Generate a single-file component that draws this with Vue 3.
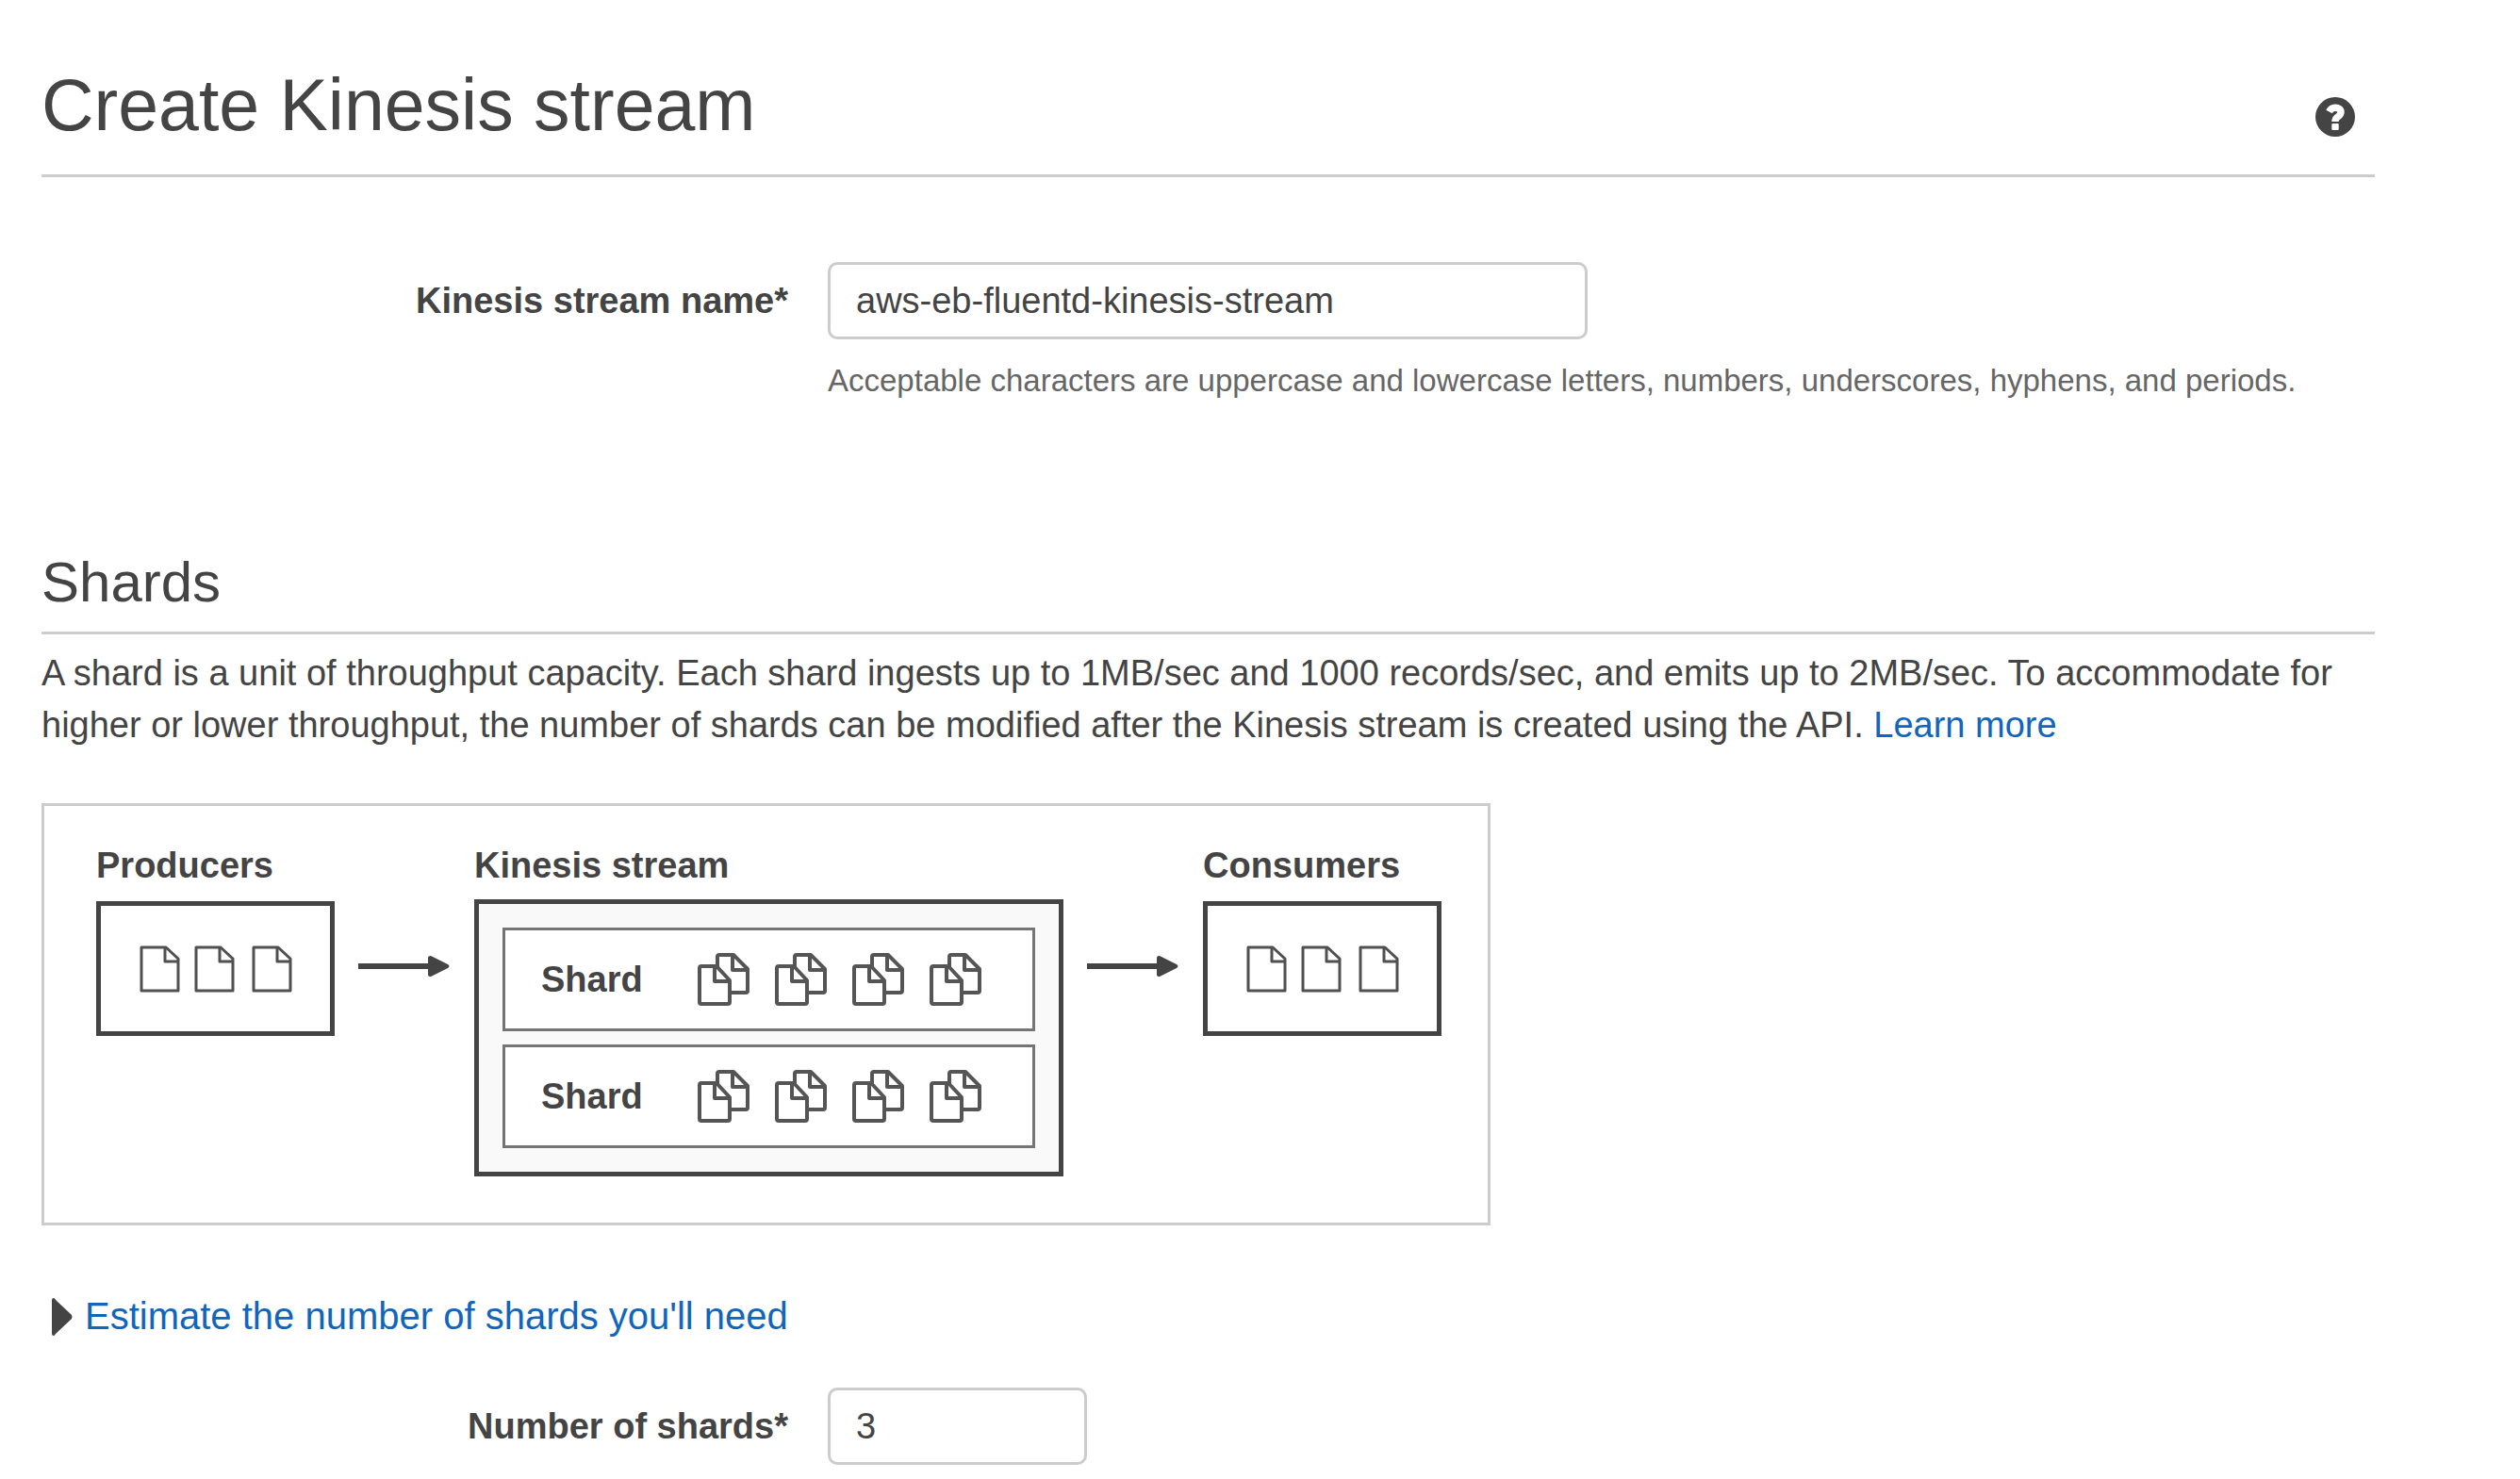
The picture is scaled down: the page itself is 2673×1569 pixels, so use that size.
<script setup>
import { ref } from 'vue'

const streamName = ref('aws-eb-fluentd-kinesis-stream')
const shardCount = ref('3')
const shardRows = [1, 2]
const copiesPerShard = [1, 2, 3, 4]
</script>

<template>
  <main class="page">
    <header class="page-header">
      <h1>Create Kinesis stream</h1>
      <button class="help" type="button" aria-label="Help">
        <svg viewBox="0 0 42 42" aria-hidden="true">
          <circle cx="21" cy="21" r="21" fill="#444" />
          <path
            d="M14.5 15.500C16 12.700 18 11.300 21 11.300C24.500 11.300 27 13 27 16C27 18.800 25.300 20 23.400 21.300C21.600 22.500 21 23.300 21 26"
            fill="none"
            stroke="#fff"
            stroke-width="7.400"
          />
          <rect x="17.300" y="28" width="7.400" height="7" rx="1" fill="#fff" />
        </svg>
      </button>
    </header>

    <form @submit.prevent>
      <div class="field name-field">
        <label for="stream-name">Kinesis stream name*</label>
        <div class="control">
          <input id="stream-name" v-model="streamName" type="text" aria-describedby="name-hint" />
          <p id="name-hint" class="hint">
            Acceptable characters are uppercase and lowercase letters, numbers, underscores, hyphens, and periods.
          </p>
        </div>
      </div>

      <section class="shards">
        <h2>Shards</h2>
        <p class="intro">
          A shard is a unit of throughput capacity. Each shard ingests up to 1MB/sec and 1000 records/sec, and emits up
          to 2MB/sec. To accommodate for higher or lower throughput, the number of shards can be modified after the
          Kinesis stream is created using the API. <a href="#learn-more">Learn more</a>
        </p>

        <div class="diagram">
          <div class="endpoint">
            <h3>Producers</h3>
            <div class="endpoint-box">
              <svg class="pages" viewBox="0 0 162 50" aria-hidden="true">
                <g v-for="x in [0, 58, 119]" :key="x" :transform="`translate(${x} 0)`">
                  <path d="M2 2H28L41 14V48H2Z" />
                  <path d="M27 2V17H41" />
                </g>
              </svg>
            </div>
          </div>

          <svg class="arrow" viewBox="0 0 98 22" aria-hidden="true">
            <path d="M0 8H74V2Q74 0 77 0L95 9Q98 11 95 13L77 22Q74 22 74 20V14H0Z" />
          </svg>

          <div class="stream">
            <h3>Kinesis stream</h3>
            <div class="stream-box">
              <div v-for="row in shardRows" :key="row" class="shard">
                <span>Shard</span>
                <div class="copies">
                  <svg v-for="copy in copiesPerShard" :key="copy" viewBox="0 0 55 56" aria-hidden="true">
                    <path d="M21 17V4Q21 2 23 2H38L53 17V40Q53 42 51 42H35" />
                    <path d="M37 2V18H53" />
                    <path d="M4 14H20L34 29V52Q34 54 32 54H4Q2 54 2 52V16Q2 14 4 14Z" />
                    <path d="M18 14V30H33" />
                  </svg>
                </div>
              </div>
            </div>
          </div>

          <svg class="arrow" viewBox="0 0 98 22" aria-hidden="true">
            <path d="M0 8H74V2Q74 0 77 0L95 9Q98 11 95 13L77 22Q74 22 74 20V14H0Z" />
          </svg>

          <div class="endpoint">
            <h3>Consumers</h3>
            <div class="endpoint-box">
              <svg class="pages" viewBox="0 0 162 50" aria-hidden="true">
                <g v-for="x in [0, 58, 119]" :key="x" :transform="`translate(${x} 0)`">
                  <path d="M2 2H28L41 14V48H2Z" />
                  <path d="M27 2V17H41" />
                </g>
              </svg>
            </div>
          </div>
        </div>

        <button class="estimate" type="button" aria-expanded="false">
          <svg viewBox="0 0 22 40" aria-hidden="true">
            <path d="M0 2Q0 0 2 0Q3 0 4 2L21 18Q22 20 21 22L4 38Q3 40 2 40Q0 40 0 38Z" fill="#444" />
          </svg>
          Estimate the number of shards you'll need
        </button>
      </section>

      <div class="field">
        <label for="shard-count">Number of shards*</label>
        <div class="control">
          <input id="shard-count" v-model="shardCount" class="short" type="text" inputmode="numeric" />
        </div>
      </div>
    </form>
  </main>
</template>

<style>
body {
  background: #fff;
}
</style>

<style scoped>
.page {
  padding: 66px 154px 14px 44px;
  color: #444;
  font-family: "Liberation Sans", Arial, sans-serif;
  font-size: 38px;
  line-height: 55px;
}

h1,
h2,
h3,
p {
  margin: 0;
  font-weight: 400;
}

button {
  border: 0;
  background: none;
  font: inherit;
  cursor: pointer;
}

.page-header {
  display: flex;
  justify-content: space-between;
  align-items: flex-end;
  padding-bottom: 29px;
  border-bottom: 3px solid #ccc;
}

h1 {
  font-size: 77px;
  line-height: 90px;
}

.help {
  margin-right: 10px;
  padding: 11px;
}

.help svg {
  display: block;
  width: 42px;
  height: 42px;
}

.field {
  display: grid;
  grid-template-columns: 32% minmax(0, 1fr);
  column-gap: 42px;
}

.name-field {
  margin-top: 90px;
}

label {
  font-weight: 700;
  line-height: 82px;
  text-align: right;
}

input {
  display: block;
  box-sizing: border-box;
  width: 100%;
  max-width: 806px;
  height: 82px;
  padding: 0 27px;
  border: 3px solid #ccc;
  border-radius: 10px;
  background: #fff;
  color: inherit;
  font: inherit;
}

.short {
  max-width: 275px;
}

.hint {
  margin-top: 24px;
  color: #666;
  font-size: 33px;
  line-height: 40px;
}

.shards {
  margin-top: 159px;
  margin-bottom: 48px;
}

h2 {
  padding-bottom: 17px;
  border-bottom: 3px solid #ccc;
  font-size: 60px;
  line-height: 70px;
}

.intro {
  margin-top: 14px;
}

a {
  color: #16b;
  text-decoration: none;
}

.diagram {
  display: flex;
  align-items: flex-start;
  gap: 25px;
  box-sizing: border-box;
  width: fit-content;
  margin-top: 55px;
  padding: 41px 49px 49px 55px;
  border: 3px solid #ccc;
}

h3 {
  font-size: 38px;
  font-weight: 700;
  line-height: 44px;
}

.endpoint {
  width: 253px;
}

.endpoint-box {
  display: flex;
  align-items: center;
  justify-content: center;
  box-sizing: border-box;
  height: 143px;
  margin-top: 16px;
  border: 5px solid #444;
}

.pages {
  width: 162px;
  height: 50px;
  fill: none;
  stroke: #505050;
  stroke-width: 3px;
  stroke-linejoin: round;
}

.arrow {
  width: 98px;
  height: 22px;
  margin-top: 118px;
  fill: #444;
}

.stream {
  width: 625px;
}

.stream-box {
  display: flex;
  flex-direction: column;
  gap: 14px;
  margin-top: 14px;
  padding: 25px;
  border: 5px solid #444;
  background: #f9f9f9;
}

.shard {
  display: flex;
  align-items: center;
  gap: 58px;
  box-sizing: border-box;
  height: 110px;
  padding-left: 38px;
  border: 3px solid #757575;
  background: #fff;
  font-size: 38px;
  font-weight: 700;
  line-height: 44px;
}

.copies {
  display: flex;
  gap: 27px;
}

.copies svg {
  width: 55px;
  height: 56px;
  fill: none;
  stroke: #555;
  stroke-width: 4px;
  stroke-linejoin: round;
}

.estimate {
  display: flex;
  align-items: center;
  gap: 13px;
  margin-top: 69px;
  padding: 0 0 0 11px;
  color: #16b;
  font-size: 40px;
}

.estimate svg {
  width: 22px;
  height: 40px;
}
</style>
